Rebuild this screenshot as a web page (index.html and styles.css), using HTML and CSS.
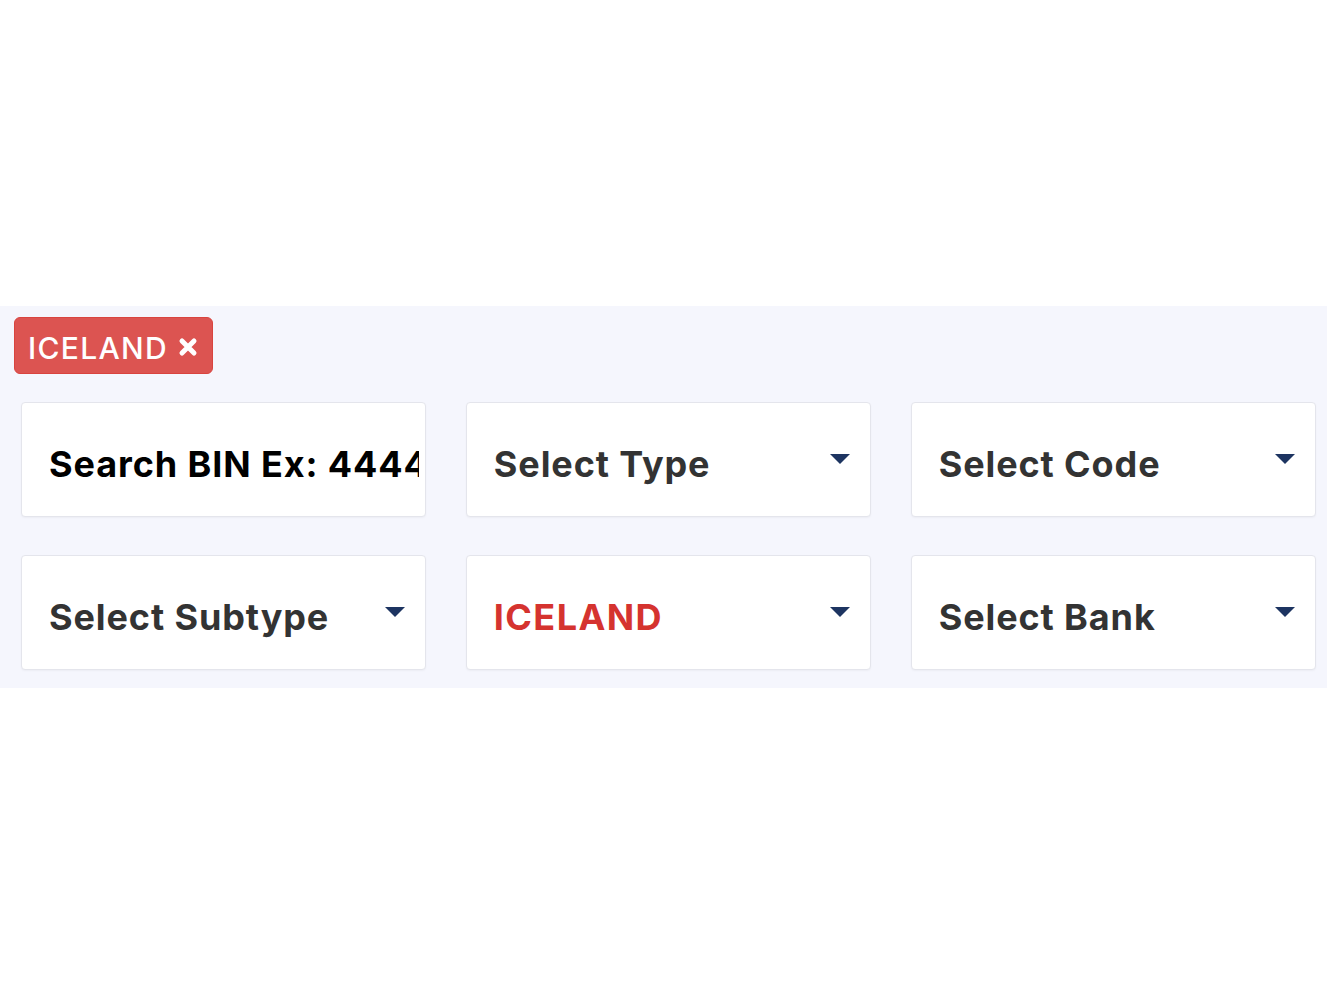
FILE: index.html
```html
<!DOCTYPE html>
<html lang="en">
<head>
<meta charset="utf-8">
<title>BIN Search</title>
<link rel="stylesheet" href="styles.css">
</head>
<body>
<div class="top-space"></div>
<section class="filters">
  <div class="tags">
    <span class="tag"><span class="tag-label">ICELAND</span><svg class="tag-x" viewBox="0 0 20 20" width="20" height="20"><path d="M4 4 L16 16 M16 4 L4 16" stroke="#fff" stroke-width="5" stroke-linecap="round"/></svg></span>
  </div>
  <div class="grid">
    <div class="field search"><span class="field-text">Search BIN Ex: 444444</span></div>
    <div class="field select"><span class="field-text">Select Type</span><span class="caret"></span></div>
    <div class="field select"><span class="field-text">Select Code</span><span class="caret"></span></div>
    <div class="field select"><span class="field-text">Select Subtype</span><span class="caret"></span></div>
    <div class="field select"><span class="field-text active">ICELAND</span><span class="caret"></span></div>
    <div class="field select"><span class="field-text">Select Bank</span><span class="caret"></span></div>
  </div>
</section>
</body>
</html>
```
FILE: styles.css
```css
html, body {
  margin: 0;
  padding: 0;
  background: #ffffff;
  font-family: Inter, "Open Sans", "Liberation Sans", sans-serif;
}

.top-space {
  height: 306px;
}

.filters {
  background: #f5f6fd;
  padding: 11px 11px 18px 14px;
}

.tags {
  display: flex;
}

.tag {
  display: inline-flex;
  align-items: center;
  gap: 10px;
  height: 57px;
  box-sizing: border-box;
  padding: 4px 14px 0 13px;
  background: #dc5451;
  border: 1px solid #d9443f;
  border-radius: 6px;
  color: #ffffff;
  font-size: 30px;
  font-weight: 500;
}

.tag-label {
  letter-spacing: 1.3px;
}

.tag-x {
  display: block;
  margin-top: -2px;
}

.grid {
  margin-top: 28px;
  margin-left: 7px;
  display: grid;
  grid-template-columns: repeat(3, 1fr);
  column-gap: 39.5px;
  row-gap: 38px;
}

.field {
  height: 115px;
  box-sizing: border-box;
  background: #ffffff;
  border: 1px solid #e4e5ec;
  border-radius: 4px;
  box-shadow: 0 1px 2px rgba(0, 0, 0, 0.04);
  display: flex;
  align-items: center;
  padding: 8px 20px 0 27px;
  overflow: hidden;
}

.search {
  padding-right: 6px;
}

.field-text {
  flex: 1;
  min-width: 0;
  white-space: nowrap;
  overflow: hidden;
  font-size: 36px;
  font-weight: 700;
  letter-spacing: 0.9px;
  color: #333333;
}

.search .field-text {
  color: #000000;
  text-overflow: clip;
}

.field-text.active {
  color: #d5332f;
  letter-spacing: 1.4px;
}

.caret {
  width: 0;
  height: 0;
  border-left: 10px solid transparent;
  border-right: 10px solid transparent;
  border-top: 10px solid #1d3461;
  margin-top: -10px;
}
```
